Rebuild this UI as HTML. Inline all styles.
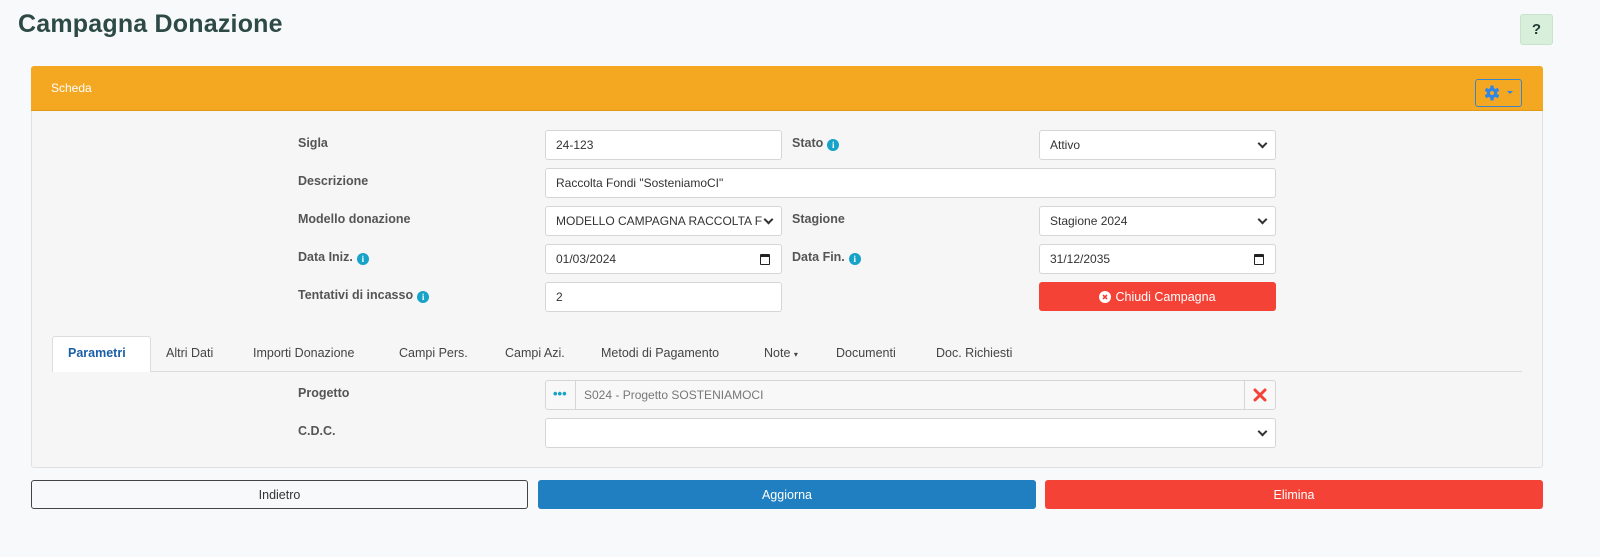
<!DOCTYPE html>
<html><head><meta charset="utf-8">
<style>
*{box-sizing:border-box;margin:0;padding:0}
body{width:1600px;height:557px;background:#f8f9fa;font-family:"Liberation Sans",sans-serif;font-size:12px;color:#444;position:relative;overflow:hidden}
.a{position:absolute}
h1{position:absolute;left:18px;top:10px;font-size:25px;font-weight:bold;color:#2d4a47;letter-spacing:0.2px}
.help{left:1520px;top:14px;width:33px;height:31px;background:#d8efdb;border:1px solid #c8e3cb;border-radius:3px;text-align:center;line-height:30px;font-weight:bold;font-size:15px;color:#1f3a35}
.card{left:31px;top:66px;width:1512px;height:402px;background:#f6f6f6;border:1px solid #e0e0e0;border-radius:3px}
.hdr{left:31px;top:66px;width:1512px;height:45px;background:#f4a822;border-bottom:1px solid #e09a18;border-radius:3px 3px 0 0;color:#fff;font-size:12px;padding:15px 0 0 20px}
.gear{left:1475px;top:79px;width:47px;height:28px;border:1px solid #3d86c6;border-radius:3px}
.lbl{font-weight:bold;color:#555;font-size:12.5px}
.in{background:#fff;border:1px solid #d6d6d6;border-radius:3px;height:30px;padding:0 10px;line-height:28px;font-size:12px;color:#333}
.chev{position:absolute;right:9px;top:9px;width:7px;height:7px;border-right:2px solid #333;border-bottom:2px solid #333;transform:rotate(45deg)}
.cal{position:absolute;right:11px;top:9px;width:10px;height:11px;border:1.5px solid #222;border-top-width:3px;border-radius:1px}
.info{display:inline-flex;align-items:center;justify-content:center;width:12px;height:12px;border-radius:50%;background:#17a2c8;color:#fff;font-size:9px;font-weight:bold;margin-left:4px;vertical-align:-1px;font-family:"Liberation Serif",serif}
.tab{top:346px;font-size:12.5px;color:#444}
.btn{top:480px;height:29px;border-radius:3px;display:flex;align-items:center;justify-content:center;font-size:12.5px}
</style></head><body>
<h1>Campagna Donazione</h1>
<div class="a help">?</div>
<div class="a card"></div>
<div class="a hdr">Scheda</div>
<div class="a gear">
<svg class="a" style="left:8px;top:5px" width="16" height="16" viewBox="0 0 16 16"><g fill="#2f86e8"><circle cx="8" cy="8" r="5.2"/><rect x="6.3" y="0.5" width="3.4" height="15" rx="0.8"/><rect x="6.3" y="0.5" width="3.4" height="15" rx="0.8" transform="rotate(60 8 8)"/><rect x="6.3" y="0.5" width="3.4" height="15" rx="0.8" transform="rotate(120 8 8)"/></g><circle cx="8" cy="8" r="2" fill="#f4a822"/></svg>
<div class="a" style="left:31px;top:11px;border-left:3px solid transparent;border-right:3px solid transparent;border-top:3px solid #2f86e8"></div>
</div>

<div class="a lbl" style="left:298px;top:136px">Sigla</div>
<div class="a in" style="left:545px;top:130px;width:237px">24-123</div>
<div class="a lbl" style="left:792px;top:136px">Stato<span class="info">i</span></div>
<div class="a in" style="left:1039px;top:130px;width:237px">Attivo<span class="chev"></span></div>

<div class="a lbl" style="left:298px;top:174px">Descrizione</div>
<div class="a in" style="left:545px;top:168px;width:731px">Raccolta Fondi "SosteniamoCI"</div>

<div class="a lbl" style="left:298px;top:212px">Modello donazione</div>
<div class="a in" style="left:545px;top:206px;width:237px">MODELLO CAMPAGNA RACCOLTA F<span class="chev"></span></div>
<div class="a lbl" style="left:792px;top:212px">Stagione</div>
<div class="a in" style="left:1039px;top:206px;width:237px">Stagione 2024<span class="chev"></span></div>

<div class="a lbl" style="left:298px;top:250px">Data Iniz.<span class="info">i</span></div>
<div class="a in" style="left:545px;top:244px;width:237px">01/03/2024<span class="cal"></span></div>
<div class="a lbl" style="left:792px;top:250px">Data Fin.<span class="info">i</span></div>
<div class="a in" style="left:1039px;top:244px;width:237px">31/12/2035<span class="cal"></span></div>

<div class="a lbl" style="left:298px;top:288px">Tentativi di incasso<span class="info">i</span></div>
<div class="a in" style="left:545px;top:282px;width:237px">2</div>
<div class="a" style="left:1039px;top:282px;width:237px;height:29px;background:#f44336;border-radius:3px;color:#fff;display:flex;align-items:center;justify-content:center;font-size:12.5px"><svg width="12" height="12" viewBox="0 0 12 12" style="margin-right:4px"><circle cx="6" cy="6" r="6" fill="#fff"/><path d="M4 4L8 8M8 4L4 8" stroke="#f44336" stroke-width="1.6"/></svg>Chiudi Campagna</div>

<div class="a" style="left:52px;top:371px;width:1470px;height:1px;background:#dcdcdc"></div>
<div class="a" style="left:52px;top:336px;width:99px;height:36px;background:#fff;border:1px solid #dcdcdc;border-bottom:none;border-radius:3px 3px 0 0"></div>
<div class="a tab" style="left:68px;color:#1b5fa8;font-weight:bold">Parametri</div>
<div class="a tab" style="left:166px">Altri Dati</div>
<div class="a tab" style="left:253px">Importi Donazione</div>
<div class="a tab" style="left:399px">Campi Pers.</div>
<div class="a tab" style="left:505px">Campi Azi.</div>
<div class="a tab" style="left:601px">Metodi di Pagamento</div>
<div class="a tab" style="left:764px">Note <span style="font-size:8px">▾</span></div>
<div class="a tab" style="left:836px">Documenti</div>
<div class="a tab" style="left:936px">Doc. Richiesti</div>

<div class="a lbl" style="left:298px;top:386px">Progetto</div>
<div class="a" style="left:545px;top:380px;width:731px;height:30px;border:1px solid #d6d6d6;border-radius:3px;background:#f8f8f8"></div>
<div class="a" style="left:575px;top:380px;width:1px;height:30px;background:#d6d6d6"></div>
<div class="a" style="left:1244px;top:380px;width:1px;height:30px;background:#d6d6d6"></div>
<div class="a" style="left:553px;top:386px;color:#17a2c8;font-weight:bold;font-size:13px">•••</div>
<div class="a" style="left:584px;top:388px;color:#777;font-size:12px">S024 - Progetto SOSTENIAMOCI</div>
<svg class="a" style="left:1253px;top:388px" width="14" height="14" viewBox="0 0 14 14"><path d="M2 2L12 12M12 2L2 12" stroke="#f44336" stroke-width="3" stroke-linecap="round"/></svg>

<div class="a lbl" style="left:298px;top:424px">C.D.C.</div>
<div class="a in" style="left:545px;top:418px;width:731px"><span class="chev"></span></div>

<div class="a btn" style="left:31px;width:497px;border:1px solid #444;background:#f8f9fa;color:#333">Indietro</div>
<div class="a btn" style="left:538px;width:498px;background:#1f7fc0;color:#fff">Aggiorna</div>
<div class="a btn" style="left:1045px;width:498px;background:#f44336;color:#fff">Elimina</div>
</body></html>
